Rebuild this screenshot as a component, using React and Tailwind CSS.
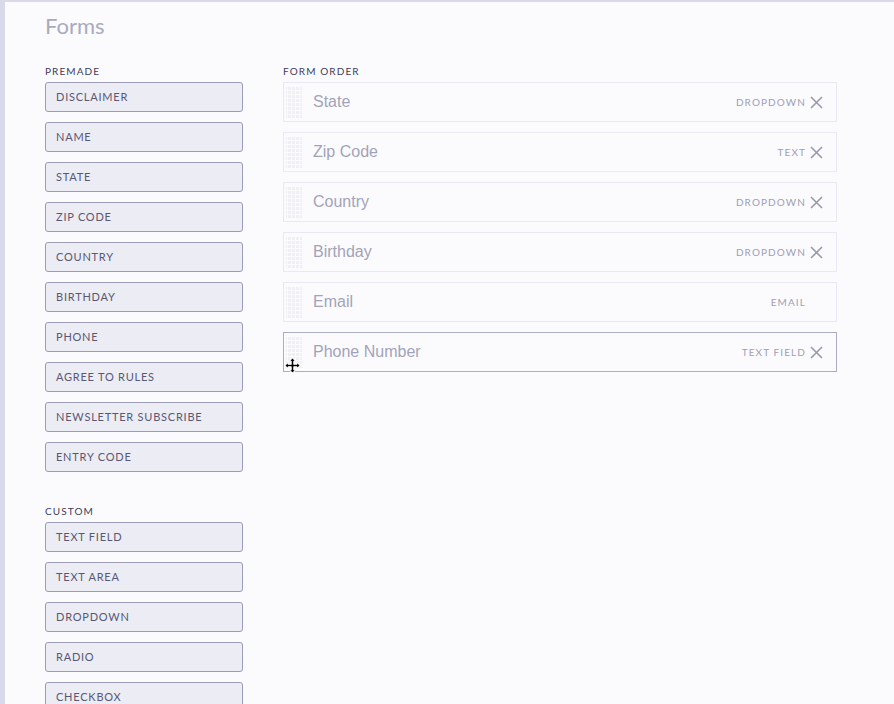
const premade = [
  "Disclaimer",
  "Name",
  "State",
  "Zip Code",
  "Country",
  "Birthday",
  "Phone",
  "Agree to Rules",
  "Newsletter Subscribe",
  "Entry Code",
];

const custom = ["Text Field", "Text Area", "Dropdown", "Radio", "Checkbox"];

const order = [
  { name: "State", type: "Dropdown", removable: true },
  { name: "Zip Code", type: "Text", removable: true },
  { name: "Country", type: "Dropdown", removable: true },
  { name: "Birthday", type: "Dropdown", removable: true },
  { name: "Email", type: "Email", removable: false },
  { name: "Phone Number", type: "Text Field", removable: true, dragging: true },
];

const label = "font-['Lato',sans-serif] text-[10px] uppercase tracking-[0.11em]";

const FieldButton = ({ text }) => (
  <button className="flex h-[30px] w-[198px] items-center rounded-[3px] border border-[#9c9cb6] bg-[#ececf4] px-[10px] text-left font-['Lato',sans-serif] text-[11px] uppercase tracking-[0.07em] text-[#585873]">
    {text}
  </button>
);

const DragHandle = () => (
  <svg width="20" height="38" className="shrink-0">
    <defs>
      <pattern id="dots" width="4" height="4" patternUnits="userSpaceOnUse">
        <rect width="3" height="3" fill="#efeff5" />
      </pattern>
    </defs>
    <rect x="2" y="3" width="16" height="32" fill="url(#dots)" />
  </svg>
);

const RemoveIcon = () => (
  <svg width="13" height="13" viewBox="0 0 13 13">
    <path d="M1 1 L12 12 M12 1 L1 12" stroke="#9898ae" strokeWidth="1.6" fill="none" />
  </svg>
);

const OrderRow = ({ item }) => (
  <div
    className={`relative flex h-[40px] items-center border bg-[#fbfbfe] ${
      item.dragging ? "border-[#acacc2]" : "border-[#e9e9f3]"
    }`}
  >
    <DragHandle />
    <span className="ml-[9px] flex-1 font-['Liberation_Sans',sans-serif] text-[16px] text-[#a3a3b8]">
      {item.name}
    </span>
    <span className={`${label} text-[#9e9eb3]`}>{item.type}</span>
    <span className="ml-[4px] mr-[13px] flex w-[13px] items-center justify-center">
      {item.removable && <RemoveIcon />}
    </span>
    {item.dragging && (
      <svg width="17" height="17" viewBox="0 0 15 15" className="absolute left-0 top-[24px]">
        <path
          d="M7.5 0.5 L10.5 3.8 H8.7 V6.3 H11.2 V4.5 L14.5 7.5 L11.2 10.5 V8.7 H8.7 V11.2 H10.5 L7.5 14.5 L4.5 11.2 H6.3 V8.7 H3.8 V10.5 L0.5 7.5 L3.8 4.5 V6.3 H6.3 V3.8 H4.5 Z"
          fill="#000"
          stroke="#fff"
          strokeWidth="1"
          strokeLinejoin="round"
        />
      </svg>
    )}
  </div>
);

export default function App() {
  return (
    <div className="h-[704px] w-[894px] overflow-hidden border-l-[5px] border-t-2 border-l-[#d9d9ea] border-t-[#d9d9ea] bg-[#fbfbfe]">
      <div className="pl-[40px] pt-[11px]">
        <h1 className="font-['Lato',sans-serif] text-[22px] leading-[26px] text-[#aaaabd]">Forms</h1>
        <div className="mt-[26px] flex gap-[40px]">
          <div className="w-[198px]">
            <div className={`${label} mb-[5px] leading-[12px] text-[#3c3c5c]`}>Premade</div>
            <div className="flex flex-col gap-[10px]">
              {premade.map((p) => (
                <FieldButton key={p} text={p} />
              ))}
            </div>
            <div className={`${label} mb-[5px] mt-[33px] leading-[12px] text-[#3c3c5c]`}>Custom</div>
            <div className="flex flex-col gap-[10px]">
              {custom.map((p) => (
                <FieldButton key={p} text={p} />
              ))}
            </div>
          </div>
          <div className="w-[554px]">
            <div className={`${label} mb-[5px] leading-[12px] text-[#3c3c5c]`}>Form Order</div>
            <div className="flex flex-col gap-[10px]">
              {order.map((o) => (
                <OrderRow key={o.name} item={o} />
              ))}
            </div>
          </div>
        </div>
      </div>
    </div>
  );
}
